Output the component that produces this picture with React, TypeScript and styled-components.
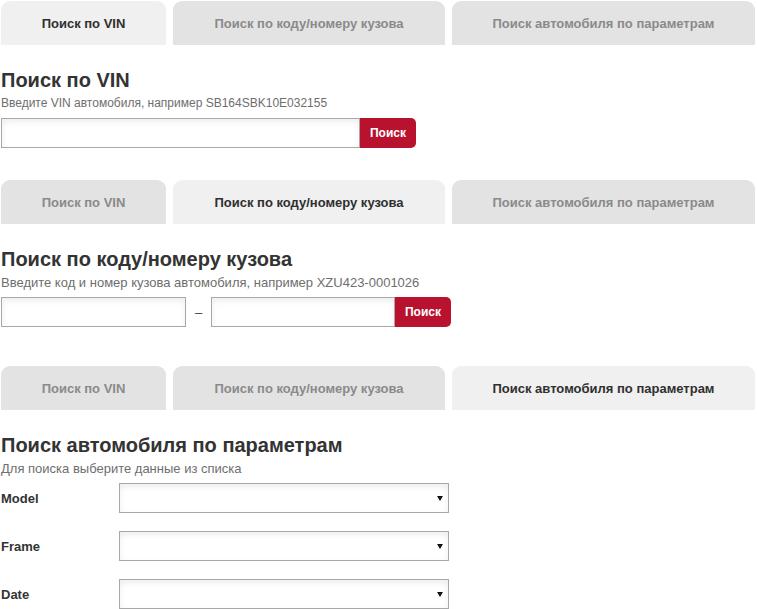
import React from "react";
import styled, { createGlobalStyle } from "styled-components";

const GlobalStyle = createGlobalStyle`
  html, body {
    margin: 0;
    padding: 0;
    background: #ffffff;
  }
  body {
    font-family: "Liberation Sans", Arial, sans-serif;
    color: #333333;
  }
  * { box-sizing: border-box; }
`;

const Page = styled.div`
  padding: 1px 0 0 1px;
  width: 757px;
`;

const Section = styled.section<{ $spaceAfter: number }>`
  display: flex;
  flex-direction: column;
  margin-bottom: ${(p) => p.$spaceAfter}px;
`;

const TabBar = styled.div`
  display: flex;
  gap: 7px;
  height: 44px;
`;

const Tab = styled.button<{ $active: boolean; $width: number }>`
  flex: none;
  width: ${(p) => p.$width}px;
  height: 44px;
  padding: 0;
  border: none;
  border-radius: 9px 9px 0 0;
  background: ${(p) => (p.$active ? "#f0f0f0" : "#e3e3e3")};
  color: ${(p) => (p.$active ? "#2f2f2f" : "#8a8a8a")};
  font-family: "Liberation Sans", Arial, sans-serif;
  font-size: 13px;
  font-weight: bold;
  white-space: nowrap;
  cursor: pointer;
`;

const Heading = styled.h2`
  margin: 23px 0 0;
  font-size: 20px;
  line-height: 24px;
  font-weight: bold;
  color: #333333;
`;

const Hint = styled.p<{ $size: number }>`
  margin: 4px 0 0;
  font-size: ${(p) => p.$size}px;
  line-height: 15px;
  color: #6e6e6e;
`;

const FormRow = styled.div`
  display: flex;
  align-items: center;
  margin-top: 7px;
`;

const TextField = styled.input<{ $width: number }>`
  width: ${(p) => p.$width}px;
  height: 30px;
  border: 1px solid #a8a8a8;
  background: #ffffff;
  box-shadow: inset 0 3px 6px rgba(0, 0, 0, 0.07);
  font-family: "Liberation Sans", Arial, sans-serif;
  font-size: 13px;
  padding: 0 6px;
  outline: none;
`;

const Dash = styled.span`
  width: 25px;
  text-align: center;
  font-size: 13px;
  color: #444444;
`;

const SearchButton = styled.button`
  height: 30px;
  width: 56px;
  border: none;
  border-radius: 0 5px 5px 0;
  background: #b8122f;
  color: #ffffff;
  font-family: "Liberation Sans", Arial, sans-serif;
  font-size: 12px;
  font-weight: bold;
  cursor: pointer;
`;

const ParamList = styled.div`
  display: flex;
  flex-direction: column;
  gap: 18px;
  margin-top: 7px;
`;

const ParamRow = styled.div`
  display: grid;
  grid-template-columns: 118px 330px;
  align-items: center;
`;

const ParamLabel = styled.label`
  font-size: 13px;
  font-weight: bold;
  color: #333333;
`;

const SelectWrap = styled.div`
  position: relative;
  height: 30px;
`;

const Select = styled.select`
  appearance: none;
  width: 100%;
  height: 30px;
  border: 1px solid #a8a8a8;
  border-radius: 0;
  background: #ffffff;
  box-shadow: inset 0 3px 6px rgba(0, 0, 0, 0.07);
  font-family: "Liberation Sans", Arial, sans-serif;
  font-size: 13px;
  padding: 0 20px 0 6px;
  outline: none;
`;

const Caret = styled.svg`
  position: absolute;
  right: 6px;
  top: 13px;
  pointer-events: none;
`;

const TABS = [
  { title: "Поиск по VIN", width: 165 },
  { title: "Поиск по коду/номеру кузова", width: 272 },
  { title: "Поиск автомобиля по параметрам", width: 303 },
];

function Tabs({ active }: { active: number }) {
  return (
    <TabBar>
      {TABS.map((t, i) => (
        <Tab key={t.title} $active={i === active} $width={t.width}>
          {t.title}
        </Tab>
      ))}
    </TabBar>
  );
}

function ParamSelect({ label }: { label: string }) {
  return (
    <ParamRow>
      <ParamLabel>{label}</ParamLabel>
      <SelectWrap>
        <Select defaultValue="">
          <option value=""></option>
        </Select>
        <Caret width="6" height="5" viewBox="0 0 6 5">
          <path d="M0 0 H6 L3 5 Z" fill="#111111" />
        </Caret>
      </SelectWrap>
    </ParamRow>
  );
}

export default function App() {
  return (
    <>
      <GlobalStyle />
      <Page>
        <Section $spaceAfter={32}>
          <Tabs active={0} />
          <Heading>Поиск по VIN</Heading>
          <Hint $size={12}>Введите VIN автомобиля, например SB164SBK10E032155</Hint>
          <FormRow>
            <TextField $width={359} />
            <SearchButton>Поиск</SearchButton>
          </FormRow>
        </Section>

        <Section $spaceAfter={39}>
          <Tabs active={1} />
          <Heading>Поиск по коду/номеру кузова</Heading>
          <Hint $size={13}>Введите код и номер кузова автомобиля, например XZU423-0001026</Hint>
          <FormRow>
            <TextField $width={185} />
            <Dash>–</Dash>
            <TextField $width={184} />
            <SearchButton>Поиск</SearchButton>
          </FormRow>
        </Section>

        <Section $spaceAfter={0}>
          <Tabs active={2} />
          <Heading>Поиск автомобиля по параметрам</Heading>
          <Hint $size={13}>Для поиска выберите данные из списка</Hint>
          <ParamList>
            <ParamSelect label="Model" />
            <ParamSelect label="Frame" />
            <ParamSelect label="Date" />
          </ParamList>
        </Section>
      </Page>
    </>
  );
}
